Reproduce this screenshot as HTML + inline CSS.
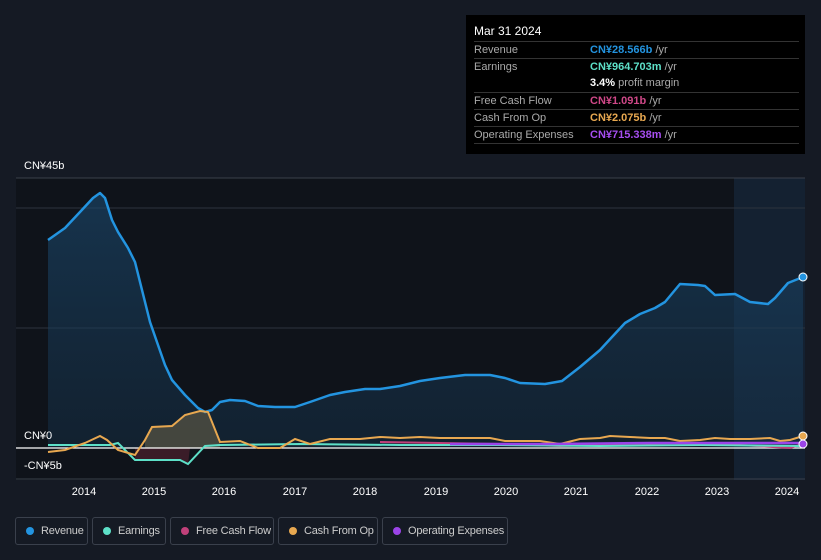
<!DOCTYPE html>
<html><head><meta charset="utf-8"><style>
body{margin:0;width:821px;height:560px;background:#151a24;font-family:"Liberation Sans",sans-serif;overflow:hidden;position:relative;color:#fff}
.tt{position:absolute;left:466px;top:15px;width:339px;height:139px;background:#000;font-size:11px}
.tt .h{position:absolute;left:8px;top:9px;font-size:12px;color:#fff}
.row{position:absolute;left:8px;width:325px;height:17px;border-top:1px solid #333;line-height:16px}
.row .l{position:absolute;left:0;color:#aaa}
.row .v{position:absolute;left:116px;font-weight:bold}
.row .v span{font-weight:normal;color:#aaa}
.ax{position:absolute;font-size:11px;color:#fff}
.yr{position:absolute;top:486px;font-size:11px;color:#fff;width:40px;text-align:center;margin-left:-20px}
.leg{position:absolute;top:517px;height:28px;border:1px solid #3a404c;border-radius:3px;font-size:11px;letter-spacing:-0.2px;color:#ccc;line-height:27px;box-sizing:border-box;white-space:nowrap}
.leg i{position:absolute;left:10px;top:9px;width:8px;height:8px;border-radius:50%}
.leg b{font-weight:normal;position:absolute;left:25px}
</style></head><body>
<svg width="821" height="560" style="position:absolute;left:0;top:0">
<defs><linearGradient id="g" x1="0" y1="0" x2="0" y2="1"><stop offset="0" stop-color="#1b4a70" stop-opacity=".8"/><stop offset="1" stop-color="#16324a" stop-opacity=".6"/></linearGradient></defs>
<rect x="16" y="178" width="789" height="302" fill="#0f131a"/>
<rect x="734" y="178" width="71" height="302" fill="#142131"/>
<line x1="16" y1="178" x2="805" y2="178" stroke="#3a404a"/>
<line x1="16" y1="208" x2="805" y2="208" stroke="#2d333d"/>
<line x1="16" y1="328" x2="805" y2="328" stroke="#2d333d"/>
<line x1="16" y1="479" x2="805" y2="479" stroke="#3a404a"/>
<path d="M48,240 L65,228 80,212 93,198 100,193 105,198 112,220 118,232 128,248 135,262 142,290 150,322 158,345 165,365 172,380 185,395 198,408 205,412 212,410 220,402 230,400 245,401 258,406 275,407 295,407 310,402 330,395 345,392 365,389 380,389 400,386 420,381 440,378 465,375 490,375 505,378 520,383 545,384 562,381 580,367 600,350 612,337 625,323 640,314 655,308 665,302 680,284 698,285 705,286 715,295 735,294 750,302 768,304 775,298 788,283 803,277 L803,448 L48,448Z" fill="url(#g)" opacity=".75"/>
<path d="M145,440 152,427 172,426 185,415 200,411 208,412 220,442 L220,448 145,448Z" fill="#4a4a40" opacity=".9"/>
<path d="M135,448 190,448 188,464 180,460 135,460Z" fill="#3a1c28"/>
<line x1="16" y1="448" x2="805" y2="448" stroke="#fff" stroke-width="1.2"/>
<path d="M48,240 L65,228 80,212 93,198 100,193 105,198 112,220 118,232 128,248 135,262 142,290 150,322 158,345 165,365 172,380 185,395 198,408 205,412 212,410 220,402 230,400 245,401 258,406 275,407 295,407 310,402 330,395 345,392 365,389 380,389 400,386 420,381 440,378 465,375 490,375 505,378 520,383 545,384 562,381 580,367 600,350 612,337 625,323 640,314 655,308 665,302 680,284 698,285 705,286 715,295 735,294 750,302 768,304 775,298 788,283 803,277" fill="none" stroke="#2394e0" stroke-width="2.5" stroke-linejoin="round"/>
<path d="M380,442 440,443 500,444 560,446 620,444 680,443 740,445 790,448 803,444" fill="none" stroke="#c0407a" stroke-width="2"/>
<path d="M48,445 L110,445 118,443 125,450 135,460 180,460 188,464 205,446 220,445 300,444 400,445 500,445 600,446 700,445 803,446" fill="none" stroke="#5de0c8" stroke-width="2"/>
<path d="M48,452 L65,450 85,443 100,436 107,440 118,450 135,455 145,440 152,427 172,426 185,415 200,411 208,412 220,442 240,441 258,448 280,448 295,439 310,444 330,439 360,439 380,437 400,438 420,437 440,438 470,438 490,438 505,441 540,441 560,444 580,439 600,438 610,436 630,437 650,438 665,438 680,441 700,440 715,438 730,439 750,439 770,438 780,441 790,440 803,436" fill="none" stroke="#e8a850" stroke-width="2"/>
<path d="M450,444 550,444 650,443 750,443 803,443" fill="none" stroke="#9b44e8" stroke-width="2.5"/>
<circle cx="803" cy="277" r="4" fill="#2394e0" stroke="#fff"/>
<circle cx="803" cy="436" r="4" fill="#e8a850" stroke="#fff"/>
<circle cx="803" cy="444" r="4" fill="#9b44e8" stroke="#fff"/>
</svg>
<div class="ax" style="left:24px;top:160px">CN¥45b</div>
<div class="ax" style="left:24px;top:430px">CN¥0</div>
<div class="ax" style="left:24px;top:460px">-CN¥5b</div>
<div class="yr" style="left:84px">2014</div><div class="yr" style="left:154px">2015</div><div class="yr" style="left:224px">2016</div><div class="yr" style="left:295px">2017</div><div class="yr" style="left:365px">2018</div><div class="yr" style="left:436px">2019</div><div class="yr" style="left:506px">2020</div><div class="yr" style="left:576px">2021</div><div class="yr" style="left:647px">2022</div><div class="yr" style="left:717px">2023</div><div class="yr" style="left:787px">2024</div>
<div class="tt"><div class="h">Mar 31 2024</div>
<div class="row" style="top:26px"><span class="l">Revenue</span><span class="v" style="color:#2394e0">CN¥28.566b <span>/yr</span></span></div>
<div class="row" style="top:43px"><span class="l">Earnings</span><span class="v" style="color:#5de0c8">CN¥964.703m <span>/yr</span></span></div>
<div class="row" style="top:60px;border-top:none"><span class="v" style="color:#fff">3.4% <span>profit margin</span></span></div>
<div class="row" style="top:77px"><span class="l">Free Cash Flow</span><span class="v" style="color:#d04888">CN¥1.091b <span>/yr</span></span></div>
<div class="row" style="top:94px"><span class="l">Cash From Op</span><span class="v" style="color:#e8a850">CN¥2.075b <span>/yr</span></span></div>
<div class="row" style="top:111px"><span class="l">Operating Expenses</span><span class="v" style="color:#a64ef0">CN¥715.338m <span>/yr</span></span></div>
<div class="row" style="top:128px;height:0"></div>
</div>
<div class="leg" style="left:15px;width:73px"><i style="background:#2394e0"></i><b>Revenue</b></div>
<div class="leg" style="left:92px;width:74px"><i style="background:#5de0c8"></i><b>Earnings</b></div>
<div class="leg" style="left:170px;width:104px"><i style="background:#c0407a"></i><b>Free Cash Flow</b></div>
<div class="leg" style="left:278px;width:100px"><i style="background:#e8a850"></i><b>Cash From Op</b></div>
<div class="leg" style="left:382px;width:126px"><i style="background:#9b44e8"></i><b>Operating Expenses</b></div>
</body></html>
